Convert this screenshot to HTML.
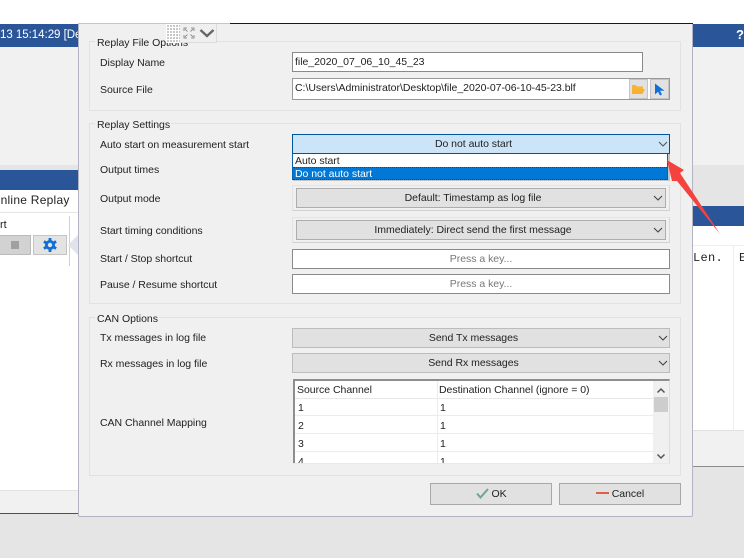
<!DOCTYPE html>
<html><head><meta charset="utf-8">
<style>
html,body{margin:0;padding:0}
body{width:744px;height:558px;position:relative;overflow:hidden;background:#e5e5e5;font-family:"Liberation Sans","Noto Sans CJK SC",sans-serif;font-size:10.5px;letter-spacing:-.03px;color:#222}
.a{position:absolute;box-sizing:border-box}
.t{position:absolute;white-space:nowrap;line-height:16px}
.tbl .t{line-height:14px}
.grp{position:absolute;box-sizing:border-box;border:1px solid #e2e2e2}
.inp{position:absolute;box-sizing:border-box;background:#fff;border:1px solid #8a8a8a;height:20px;line-height:19px;white-space:nowrap}
.cb{position:absolute;box-sizing:border-box;background:#e1e1e1;border:1px solid #adadad;text-align:center;line-height:19px;height:20px;padding-right:15px}
.wrap{position:absolute;box-sizing:border-box;border-bottom:1px solid #d0d0d0;border-right:1px solid #d8d8d8;border-left:1px solid #e4e4e4;border-top:1px solid #e4e4e4}
svg{position:absolute;overflow:visible}
</style></head><body>
<div class="a" style="left:0;top:0;width:744px;height:24px;background:#fff"></div>
<div class="a" style="left:230px;top:23px;width:463px;height:1px;background:#1a1a1a"></div>

<!-- left background -->
<div class="a" style="left:0;top:24px;width:78px;height:23px;background:#2a5699;color:#fff;font-size:11.5px;line-height:22px;white-space:nowrap;overflow:hidden">13 15:14:29 [De</div>
<div class="a" style="left:0;top:47px;width:78px;height:118px;background:#f1f1f1"></div>
<div class="a" style="left:0;top:165px;width:78px;height:5px;background:#e5e5e5"></div>
<div class="a" style="left:0;top:170px;width:78px;height:20px;background:#2a5699"></div>
<div class="a" style="left:0;top:190px;width:78px;height:300px;background:#fff"></div>
<div class="a" style="left:0;top:212px;width:78px;height:1px;background:#e6e6e6"></div>
<div class="t" style="left:0;top:192px;font-size:12px;width:78px;overflow:hidden;letter-spacing:.25px"><span style="margin-left:-9px">Online Replay</span></div>
<div class="t" style="left:0;top:217px;font-size:11px">rt</div>
<div class="a" style="left:0;top:235px;width:31px;height:20px;background:#d2d2d2;border:1px solid #bbb;border-left:0"></div>
<div class="a" style="left:11px;top:241px;width:8px;height:8px;background:#a0a0a0"></div>
<div class="a" style="left:33px;top:235px;width:34px;height:20px;background:#e3e3e3;border:1px solid #c4c4c4"></div>
<svg style="left:43px;top:238px" width="14" height="14" viewBox="0 0 14 14"><circle cx="7" cy="7" r="3.600" fill="none" stroke="#0f6fd6" stroke-width="2.800"/><path d="M7 0V3M7 11v3M.9 3.500 3.500 5M10.500 9l2.600 1.500M.9 10.500 3.500 9M10.500 5l2.600-1.500" stroke="#0f6fd6" stroke-width="2.800"/></svg>
<div class="a" style="left:69px;top:216px;width:1px;height:50px;background:#d0d0d0"></div>
<svg style="left:68px;top:235px" width="10" height="20"><path d="M10 0 0 10l10 10z" fill="#e2e3ea"/></svg>
<div class="a" style="left:0;top:490px;width:78px;height:23px;background:#f1f1f1;border-top:1px solid #e2e2e2"></div>
<div class="a" style="left:0;top:513px;width:78px;height:1px;background:#2a5699"></div>

<!-- right background -->
<div class="a" style="left:693px;top:24px;width:51px;height:23px;background:#2a5699"></div>
<div class="t" style="left:736px;top:27px;color:#fff;font-weight:bold;font-size:13px">?</div>
<div class="a" style="left:693px;top:47px;width:51px;height:118px;background:#f1f1f1"></div>
<div class="a" style="left:693px;top:165px;width:51px;height:41px;background:#e5e5e5"></div>
<div class="a" style="left:693px;top:206px;width:51px;height:20px;background:#2a5699"></div>
<div class="a" style="left:693px;top:226px;width:51px;height:204px;background:#fff"></div>
<div class="a" style="left:693px;top:245px;width:51px;height:1px;background:#eee"></div>
<div class="t" style="left:693px;top:250px;font-family:'Liberation Mono',monospace;font-size:12px;letter-spacing:.3px">Len.</div>
<div class="a" style="left:733px;top:246px;width:1px;height:184px;background:#efefef"></div>
<div class="t" style="left:739px;top:250px;font-family:'Liberation Mono',monospace;font-size:12px">E</div>
<div class="a" style="left:693px;top:430px;width:51px;height:36px;background:#f1f1f1;border-top:1px solid #e2e2e2"></div>
<div class="a" style="left:693px;top:466px;width:51px;height:1px;background:#8c8c8c"></div>

<!-- dialog -->
<div class="a" style="left:78px;top:24px;width:615px;height:493px;background:#f0f0f0;border:1px solid #b2b4c4;border-top:0;border-radius:0 0 2px 2px"></div>
<div class="a" style="left:78px;top:23px;width:152px;height:1px;background:#c4c4cc"></div>

<!-- Group 1 -->
<div class="grp" style="left:89px;top:41px;width:592px;height:70px"></div>
<div class="a" style="left:95px;top:36px;width:90px;height:12px;background:#f0f0f0"></div>
<div class="t" style="left:97px;top:35px">Replay File Options</div>
<div class="t" style="left:100px;top:55px">Display Name</div>
<div class="inp" style="left:292px;top:52px;width:351px;padding-left:2px">file_2020_07_06_10_45_23</div>
<div class="t" style="left:100px;top:82px">Source File</div>
<div class="inp" style="left:292px;top:78px;width:378px;height:22px;padding-left:2px;line-height:18px;border-color:#999">C:\Users\Administrator\Desktop\file_2020-07-06-10-45-23.blf</div>
<div class="a" style="left:629px;top:79px;width:19px;height:20px;background:#e1e1e1;border:1px solid #c4c4c4"></div>
<svg style="left:631px;top:84px" width="15" height="11"><path d="M1 1h4l1 1.500h6V5H1z" fill="#f5b43a"/><path d="M1 5h13l-2.500 5H1z" fill="#fbb02c"/></svg>
<div class="a" style="left:650px;top:79px;width:19px;height:20px;background:#e1e1e1;border:1px solid #c4c4c4"></div>
<svg style="left:654px;top:83px" width="12" height="13"><path d="M1 .5v11l3-2.800 2 3.800 2-1-2-3.700h4.500z" fill="#1070d8"/></svg>

<!-- Group 2 -->
<div class="grp" style="left:89px;top:123px;width:592px;height:181px"></div>
<div class="a" style="left:95px;top:118px;width:76px;height:12px;background:#f0f0f0"></div>
<div class="t" style="left:97px;top:117px">Replay Settings</div>

<div class="t" style="left:100px;top:137px">Auto start on measurement start</div>
<div class="cb" style="left:292px;top:134px;width:378px;background:#cce4f7;border:1px solid #005499;color:#222">Do not auto start</div>
<svg style="left:658px;top:141px" width="10" height="6"><path d="M1 1l4 4 4-4" fill="none" stroke="#555" stroke-width="1.100"/></svg>

<div class="t" style="left:100px;top:162px">Output times</div>

<div class="t" style="left:100px;top:191px">Output mode</div>
<div class="wrap" style="left:292px;top:185px;width:378px;height:26px"></div>
<div class="cb" style="left:296px;top:188px;width:370px;padding-right:16px">Default: Timestamp as log file</div>
<svg style="left:653px;top:195px" width="10" height="6"><path d="M1 1l4 4 4-4" fill="none" stroke="#444" stroke-width="1.100"/></svg>

<div class="t" style="left:100px;top:223px">Start timing conditions</div>
<div class="wrap" style="left:292px;top:217px;width:378px;height:26px"></div>
<div class="cb" style="left:296px;top:220px;width:370px;padding-right:16px">Immediately: Direct send the first message</div>
<svg style="left:653px;top:227px" width="10" height="6"><path d="M1 1l4 4 4-4" fill="none" stroke="#444" stroke-width="1.100"/></svg>

<div class="t" style="left:100px;top:251px">Start / Stop shortcut</div>
<div class="inp" style="left:292px;top:249px;width:378px;text-align:center;color:#777">Press a key...</div>
<div class="t" style="left:100px;top:277px">Pause / Resume shortcut</div>
<div class="inp" style="left:292px;top:274px;width:378px;text-align:center;color:#777">Press a key...</div>

<!-- Group 3 -->
<div class="grp" style="left:89px;top:317px;width:592px;height:159px"></div>
<div class="a" style="left:95px;top:312px;width:64px;height:12px;background:#f0f0f0"></div>
<div class="t" style="left:97px;top:311px">CAN Options</div>
<div class="t" style="left:100px;top:330px">Tx messages in log file</div>
<div class="cb" style="left:292px;top:328px;width:378px;border-color:#bcbcbc">Send Tx messages</div>
<svg style="left:658px;top:335px" width="10" height="6"><path d="M1 1l4 4 4-4" fill="none" stroke="#444" stroke-width="1.100"/></svg>
<div class="t" style="left:100px;top:356px">Rx messages in log file</div>
<div class="cb" style="left:292px;top:353px;width:378px;border-color:#bcbcbc">Send Rx messages</div>
<svg style="left:658px;top:360px" width="10" height="6"><path d="M1 1l4 4 4-4" fill="none" stroke="#444" stroke-width="1.100"/></svg>
<div class="t" style="left:100px;top:415px">CAN Channel Mapping</div>

<!-- table -->
<div class="a tbl" style="left:293px;top:379px;width:377px;height:85px;background:#fff;border:2px solid #8e8e8e;border-right:1px solid #ddd;border-bottom:0;overflow:hidden">
  <div class="a" style="left:0;top:0;width:358px;height:18px;border-bottom:1px solid #e8e8e8;background:#fff"></div>
  <div class="t" style="left:2px;top:2px">Source Channel</div>
  <div class="t" style="left:144px;top:2px">Destination Channel (ignore = 0)</div>
  <div class="a" style="left:142px;top:0;width:1px;height:85px;background:#ececec"></div>
  <div class="a" style="left:0;top:34px;width:358px;height:1px;background:#ececec"></div>
  <div class="a" style="left:0;top:52px;width:358px;height:1px;background:#ececec"></div>
  <div class="a" style="left:0;top:70px;width:358px;height:1px;background:#ececec"></div>
  <div class="t" style="left:3px;top:20px">1</div><div class="t" style="left:145px;top:20px">1</div>
  <div class="t" style="left:3px;top:38px">2</div><div class="t" style="left:145px;top:38px">1</div>
  <div class="t" style="left:3px;top:56px">3</div><div class="t" style="left:145px;top:56px">1</div>
  <div class="t" style="left:3px;top:74px">4</div><div class="t" style="left:145px;top:74px">1</div>
  <div class="a" style="left:358px;top:0;width:17px;height:85px;background:#f0f0f0"></div>
  <div class="a" style="left:359px;top:16px;width:14px;height:15px;background:#cdcdcd"></div>
  <svg style="left:361px;top:6px" width="10" height="7"><path d="M1.500 5.500 5 2l3.500 3.500" fill="none" stroke="#555" stroke-width="1.500"/></svg>
  <svg style="left:361px;top:72px" width="10" height="7"><path d="M1.500 1.500 5 5l3.500-3.500" fill="none" stroke="#555" stroke-width="1.500"/></svg>
</div>
<div class="a" style="left:293px;top:463px;width:377px;height:1px;background:#e8e8e8"></div>

<!-- buttons -->
<div class="cb" style="left:430px;top:483px;width:122px;height:22px;line-height:20px;border-color:#a8a8a8;padding:0 0 0 16px">OK</div>
<svg style="left:476px;top:488px" width="13" height="11"><path d="M1 5.500 4.500 9.500 12 1" fill="none" stroke="#6fa595" stroke-width="2"/></svg>
<div class="cb" style="left:559px;top:483px;width:122px;height:22px;line-height:20px;border-color:#a8a8a8;padding:0 0 0 16px">Cancel</div>
<div class="a" style="left:596px;top:492px;width:13px;height:2px;background:#d9634a"></div>

<!-- dropdown -->
<div class="a" style="left:293px;top:154px;width:377px;height:27px;background:rgba(0,0,0,.18)"></div>
<div class="a" style="left:292px;top:154px;width:376px;height:26px;background:#fff;border:1px solid #0a64ad;border-top:0"></div>
<div class="t" style="left:295px;top:153px">Auto start</div>
<div class="a" style="left:293px;top:167px;width:374px;height:13px;background:#0078d7;border-top:1px dotted #5a3a10;border-bottom:1px dotted #5a3a10"></div>
<div class="t" style="left:295px;top:166px;color:#fff">Do not auto start</div>

<!-- top floating toolbar -->
<div class="a" style="left:166px;top:24px;width:51px;height:19px;background:#efefef;border:1px solid #dcdcdc;border-top:0"></div>
<div class="a" style="left:166px;top:24px;width:14px;height:19px;background:#c8c8c8;background-image:linear-gradient(#fff 1px,transparent 1px),linear-gradient(90deg,#fff 1px,transparent 1px);background-size:3px 3px"></div>
<svg style="left:184px;top:28px" width="10" height="10"><path d="M0 3V0h3M7 0h3v3M0 7v3h3M10 7v3H7M1 1l2.500 2.500M9 1 6.500 3.500M1 9l2.500-2.500M9 9 6.500 6.500" fill="none" stroke="#777" stroke-width=".8"/></svg>
<svg style="left:199px;top:29px" width="16" height="9"><path d="M1.500 1 8 7l6.500-6" fill="none" stroke="#666" stroke-width="2.400"/></svg>

<!-- red arrow -->
<svg style="left:660px;top:150px" width="70" height="90"><path d="M7 10 24 20 20 23 60 84 17 31 12 31z" fill="#f4433e"/></svg>
</body></html>
